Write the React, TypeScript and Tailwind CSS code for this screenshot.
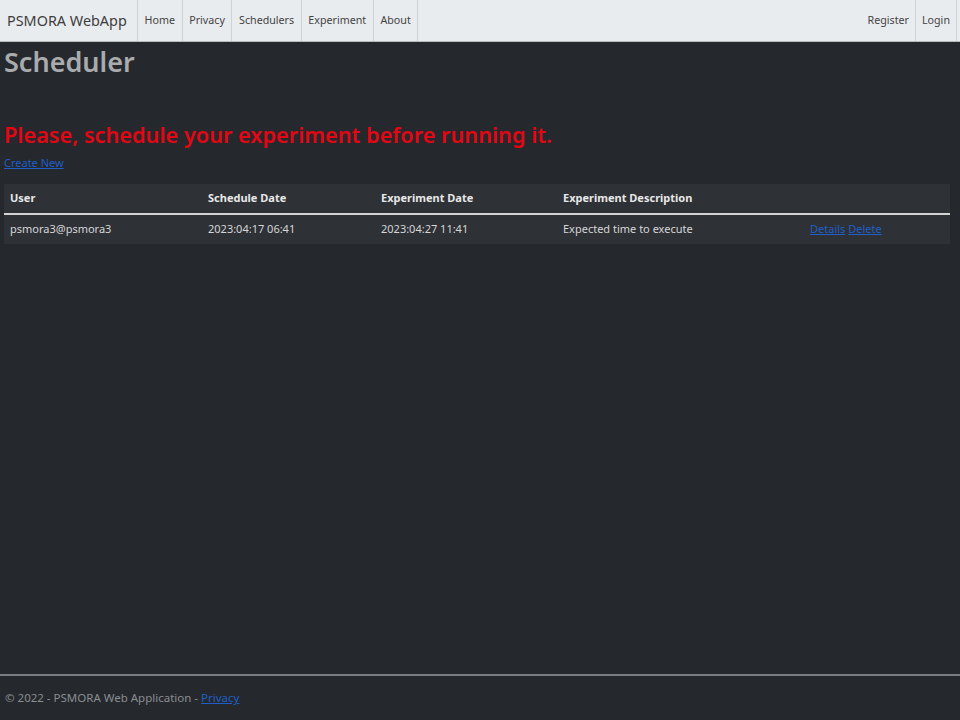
import React from "react";

const navLinks = ["Home", "Privacy", "Schedulers", "Experiment", "About"];

export default function App() {
  return (
    <div
      className="min-h-[720px] flex flex-col bg-[#25282d]"
      style={{ fontFamily: '"Noto Sans", "Open Sans", sans-serif' }}
    >
      {/* Navbar */}
      <nav className="h-[42px] flex items-stretch bg-[#e9ecef] border-b border-[#b8bbbe]">
        <div className="flex items-center pl-[7px] w-[137px] whitespace-nowrap text-[14.4px] text-[#3d3d3d]">PSMORA WebApp</div>
        <div className="flex items-stretch border-l border-[#d0d3d6]">
          {navLinks.map(l => (
            <div key={l} className="flex items-center px-[6.6px] text-[10.7px] text-[#444] border-r border-[#d0d3d6]">
              {l}
            </div>
          ))}
        </div>
        <div className="ml-auto flex items-stretch">
          <div className="flex items-center px-[6px] text-[10.7px] text-[#444] border-r border-[#d0d3d6]">Register</div>
          <div className="flex items-center px-[6px] text-[10.7px] text-[#444] border-r border-[#d0d3d6] mr-[3px]">Login</div>
        </div>
      </nav>

      {/* Content */}
      <main className="flex-1 px-[4px]">
        <h1 className="text-[27px] font-semibold text-[#a9abad] leading-[38px] mt-[1px]">Scheduler</h1>
        <h2 className="text-[21.7px] font-semibold text-[#e30613] leading-[30px] mt-[39px]">
          Please, schedule your experiment before running it.
        </h2>
        <a href="#" className="block text-[11px] text-[#1f5fc7] underline leading-[14px] mt-[6px]">Create New</a>

        <table className="mt-[14px] w-[946px] text-[11px] text-[#e8e8e8] border-collapse">
          <thead>
            <tr className="bg-[#2e3136] border-b-2 border-[#d4d4d4] h-[30px]">
              <th className="text-left font-bold pl-[6px] w-[200px]">User</th>
              <th className="text-left font-bold pl-[4px] w-[173px]">Schedule Date</th>
              <th className="text-left font-bold pl-[4px] w-[182px]">Experiment Date</th>
              <th className="text-left font-bold pl-[4px] w-[247px]">Experiment Description</th>
              <th></th>
            </tr>
          </thead>
          <tbody>
            <tr className="bg-[#2e3136] h-[30px] text-[#d6d6d6]">
              <td className="pl-[6px]">psmora3@psmora3</td>
              <td className="pl-[4px]">2023:04:17 06:41</td>
              <td className="pl-[4px]">2023:04:27 11:41</td>
              <td className="pl-[4px]">Expected time to execute</td>
              <td className="pl-[4px]">
                <a href="#" className="text-[#1f5fc7] underline">Details</a>{" "}
                <a href="#" className="text-[#1f5fc7] underline">Delete</a>
              </td>
            </tr>
          </tbody>
        </table>
      </main>

      {/* Footer */}
      <footer className="h-[46px] border-t-2 border-[#7a7d80] flex items-center px-[5px] text-[11.5px] text-[#8a8d90]">
        <span>
          © 2022 - PSMORA Web Application - <a href="#" className="text-[#1f5fc7] underline">Privacy</a>
        </span>
      </footer>
    </div>
  );
}
